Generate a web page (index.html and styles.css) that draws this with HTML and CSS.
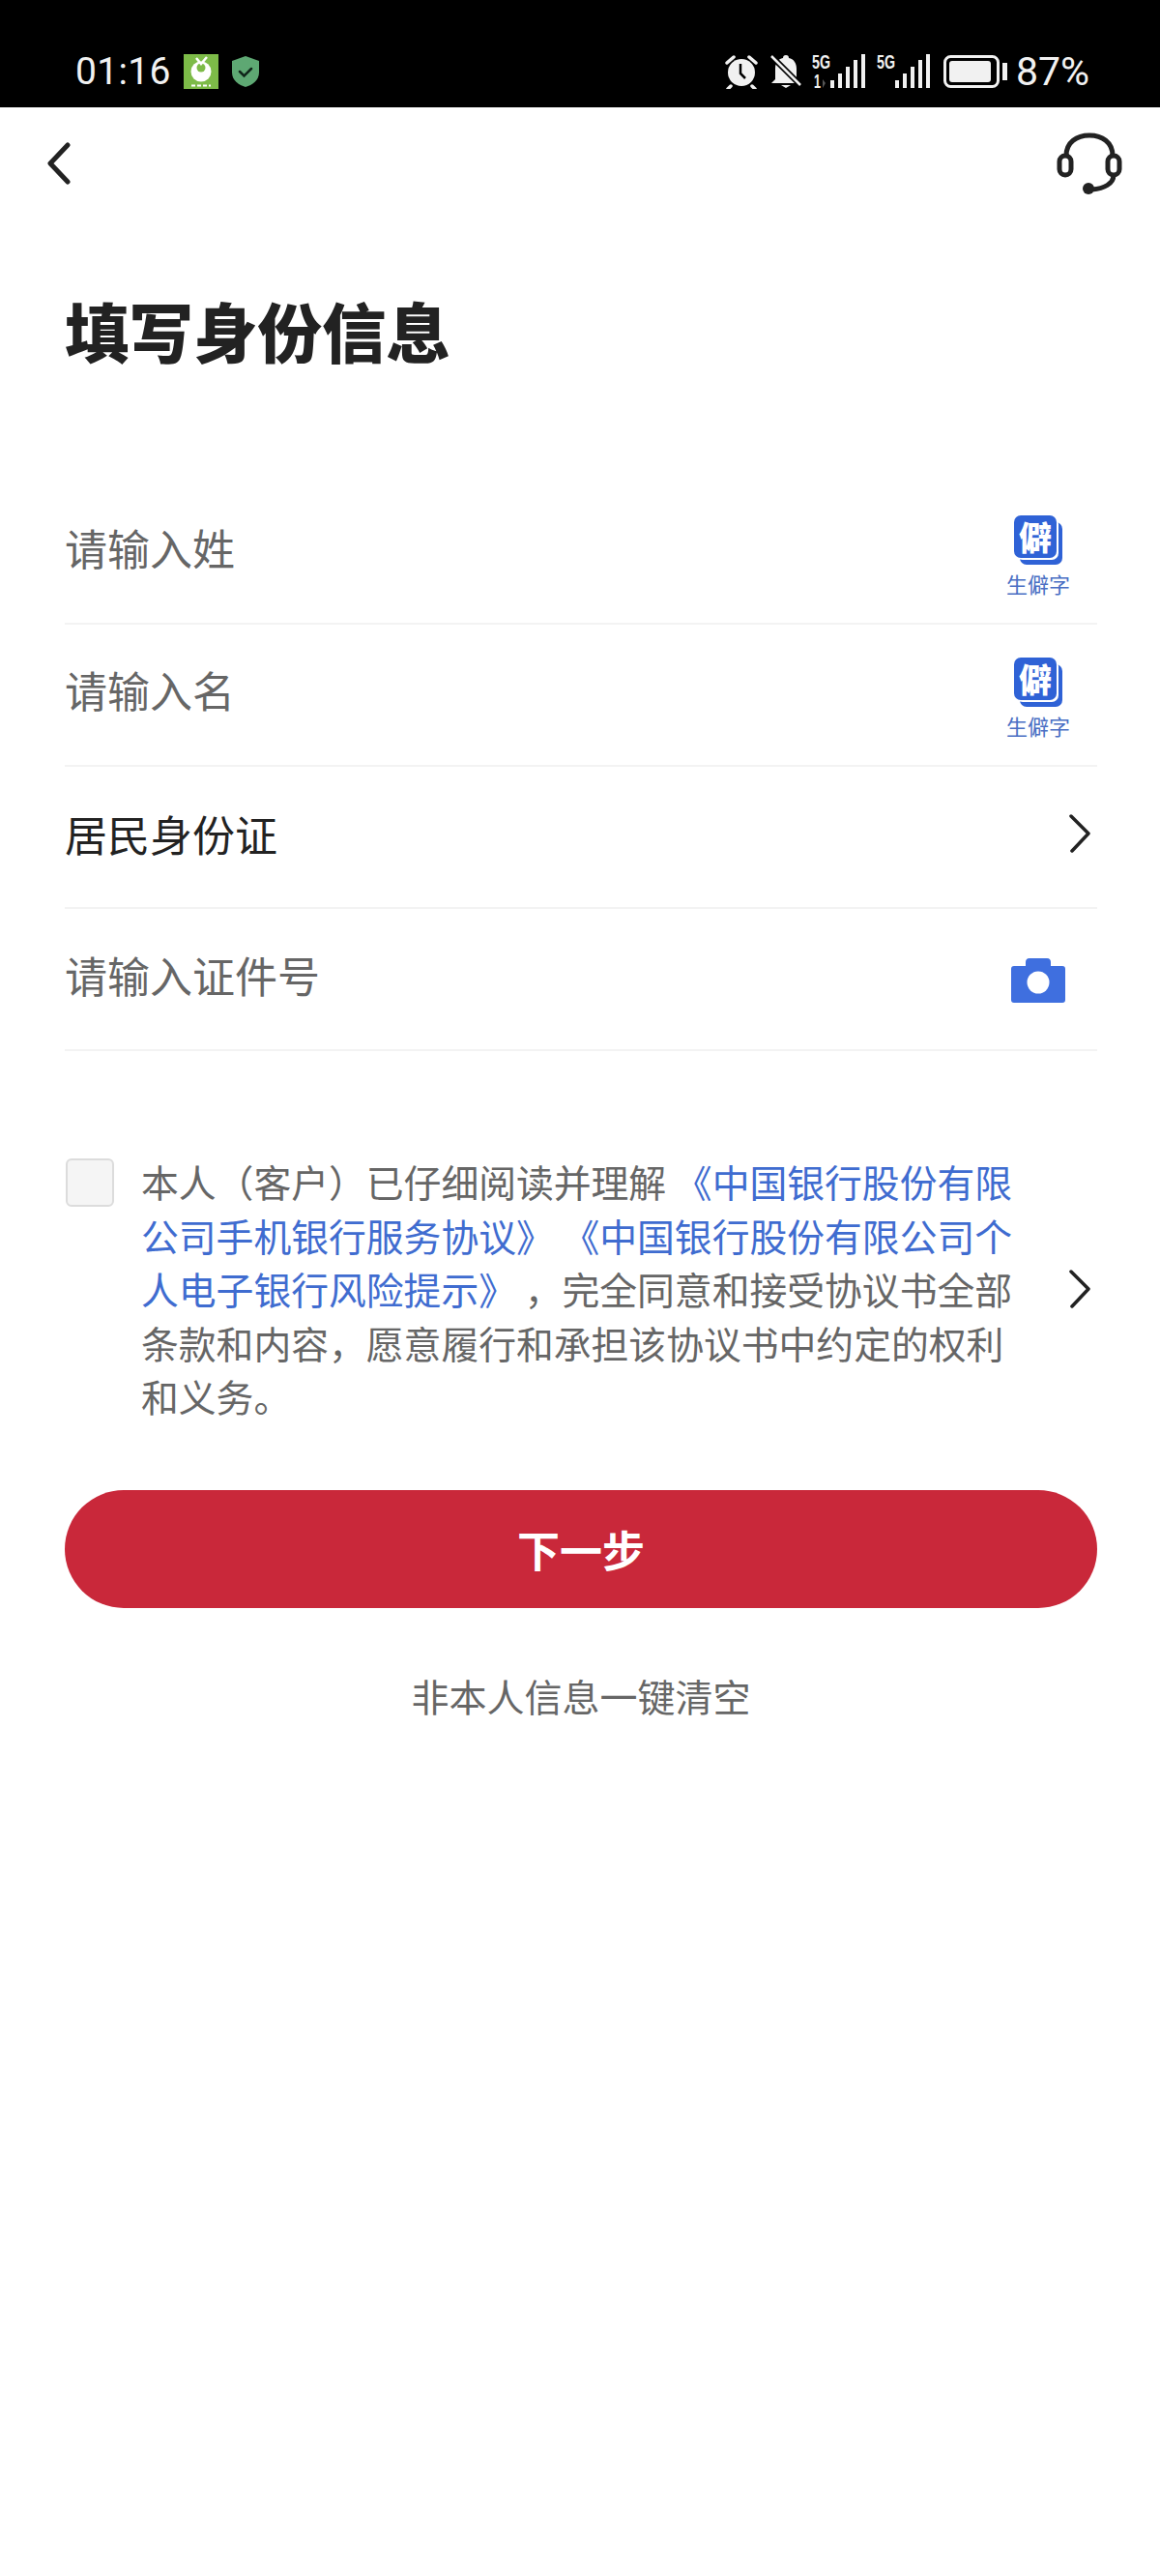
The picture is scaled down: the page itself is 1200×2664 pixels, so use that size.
FILE: index.html
```html
<!DOCTYPE html>
<html lang="zh-CN">
<head>
  <meta charset="UTF-8">
  <title>填写身份信息</title>
  <link rel="stylesheet" href="styles.css">
</head>
<body>
  <div class="status-bar">
    <span class="time">01:16</span>
    <svg class="app-icon" width="36" height="36" viewBox="0 0 36 36">
      <rect width="36" height="36" fill="#7dbb48"/>
      <circle cx="18" cy="18" r="10.500" fill="#fff"/>
      <circle cx="18" cy="14" r="4.500" fill="#7dbb48"/>
      <path d="M13 4l5 6 6-7" fill="none" stroke="#fff" stroke-width="2.500"/>
      <path d="M8 32.500h20" stroke="#fff" stroke-width="2" stroke-dasharray="4 2"/>
    </svg>
    <svg class="shield-icon" width="28" height="32" viewBox="0 0 28 32">
      <path d="M14 0l14 5v12c0 8-7 13-14 15C7 30 0 25 0 17V5z" fill="#5ea873"/>
      <path d="M8 16l4.500 4.500L20 13" fill="none" stroke="#10261a" stroke-width="2.500" stroke-linecap="round"/>
    </svg>
    <span class="status-spacer"></span>
    <svg class="alarm-icon" width="34" height="36" viewBox="0 0 34 36">
      <circle cx="17" cy="19" r="14" fill="#f1f1f1"/>
      <path d="M2 9l7-6M32 9l-7-6M6 33l-3 3M28 33l3 3" stroke="#f1f1f1" stroke-width="3.500" stroke-linecap="round"/>
      <path d="M16 10v10l5 5" fill="none" stroke="#000" stroke-width="2.500"/>
    </svg>
    <svg class="bell-icon" width="32" height="36" viewBox="0 0 32 36">
      <path d="M16 1c2 0 3 1 3 3 5 1 8 5 8 11v11l4 4H1l4-4V15C5 9 8 5 13 4c0-2 1-3 3-3z" fill="#f1f1f1"/>
      <path d="M11 32h10l-5 3z" fill="#f1f1f1"/>
      <path d="M1 2l30 30" stroke="#000" stroke-width="6"/>
      <path d="M1 2l30 30" stroke="#f1f1f1" stroke-width="2.500"/>
    </svg>
    <svg class="signal-icon" width="56" height="50" viewBox="0 -6 56 50">
      <text class="net-label" x="0" y="15" textLength="19" lengthAdjust="spacingAndGlyphs">5G</text>
      <text class="net-label" x="2" y="35" textLength="7" lengthAdjust="spacingAndGlyphs">1</text>
      <path d="M11 26l3 4-3 5z" fill="#555"/>
      <rect x="19" y="27" width="4" height="8" fill="#f1f1f1"/>
      <rect x="27" y="20" width="4" height="15" fill="#f1f1f1"/>
      <rect x="35" y="13" width="4" height="22" fill="#f1f1f1"/>
      <rect x="43" y="6" width="4" height="29" fill="#f1f1f1"/>
      <rect x="51" y="0" width="4" height="35" fill="#f1f1f1"/>
    </svg>
    <svg class="signal-icon" width="56" height="50" viewBox="0 -6 56 50">
      <text class="net-label" x="0" y="15" textLength="19" lengthAdjust="spacingAndGlyphs">5G</text>
      <rect x="19" y="27" width="4" height="8" fill="#f1f1f1"/>
      <rect x="27" y="20" width="4" height="15" fill="#f1f1f1"/>
      <rect x="35" y="13" width="4" height="22" fill="#f1f1f1"/>
      <rect x="43" y="6" width="4" height="29" fill="#f1f1f1"/>
      <rect x="51" y="0" width="4" height="35" fill="#f1f1f1"/>
    </svg>
    <svg class="battery-icon" width="66" height="34" viewBox="0 0 66 34">
      <rect x="1.500" y="1.500" width="55" height="31" rx="6" fill="none" stroke="#f1f1f1" stroke-width="3"/>
      <rect x="6" y="6" width="43" height="22" rx="3" fill="#f1f1f1"/>
      <rect x="61" y="8" width="5" height="18" fill="#f1f1f1"/>
    </svg>
    <span class="battery-text">87%</span>
  </div>

  <div class="nav-bar">
    <svg width="24" height="44" viewBox="0 0 24 44">
      <path d="M21 3L3 22l18 19" fill="none" stroke="#222" stroke-width="5" stroke-linecap="round" stroke-linejoin="round"/>
    </svg>
    <svg width="68" height="64" viewBox="0 0 68 64">
      <path d="M10 24C10 10 21 3 34 3s24 7 24 21" fill="none" stroke="#222" stroke-width="5"/>
      <rect x="3" y="24" width="12" height="20" rx="6" fill="none" stroke="#222" stroke-width="5"/>
      <rect x="53" y="24" width="12" height="20" rx="6" fill="none" stroke="#222" stroke-width="5"/>
      <path d="M59 44c0 9-10 14-22 15" fill="none" stroke="#222" stroke-width="5"/>
      <circle cx="33" cy="58" r="6" fill="#222"/>
    </svg>
  </div>

  <div class="page">
    <h1 class="page-title">填写身份信息</h1>

    <div class="form">
      <div class="form-row name-row">
        <span class="placeholder">请输入姓</span>
        <div class="rare-word">
          <span class="rare-badge">僻</span>
          <span class="rare-label">生僻字</span>
        </div>
      </div>
      <div class="form-row name-row">
        <span class="placeholder">请输入名</span>
        <div class="rare-word">
          <span class="rare-badge">僻</span>
          <span class="rare-label">生僻字</span>
        </div>
      </div>
      <div class="form-row type-row">
        <span class="row-value">居民身份证</span>
        <svg class="chevron" width="24" height="40" viewBox="0 0 24 40">
          <path d="M3 2l18 18L4 38" fill="none" stroke="#222" stroke-width="3.500" stroke-linecap="round" stroke-linejoin="round"/>
        </svg>
      </div>
      <div class="form-row id-row">
        <span class="placeholder">请输入证件号</span>
        <svg class="camera" width="56" height="46" viewBox="0 0 56 46">
          <path d="M15 8V4c0-2 1-4 4-4h18c3 0 4 2 4 4v4h12c2 0 3 1 3 3v32c0 2-1 3-3 3H3c-2 0-3-1-3-3V11c0-2 1-3 3-3z" fill="#3f6fdf"/>
          <circle cx="28" cy="25" r="11.500" fill="#fff"/>
        </svg>
      </div>
    </div>

    <div class="agreement">
      <span class="checkbox"></span>
      <p class="agreement-text">本人（客户）已仔细阅读并理解 <a class="doc-link">《中国银行股份有限<br>公司手机银行服务协议》 《中国银行股份有限公司个<br>人电子银行风险提示》</a> ，完全同意和接受协议书全部<br>条款和内容，愿意履行和承担该协议书中约定的权利<br>和义务。</p>
      <svg class="chevron agreement-chevron" width="24" height="40" viewBox="0 0 24 40">
        <path d="M3 2l18 18L4 38" fill="none" stroke="#222" stroke-width="3.500" stroke-linecap="round" stroke-linejoin="round"/>
      </svg>
    </div>

    <button class="next-btn">下一步</button>
    <div class="clear-link">非本人信息一键清空</div>
  </div>
</body>
</html>
```

FILE: styles.css
```css
* {
  box-sizing: border-box;
}
body {
  margin: 0;
  background: #fff;
  font-family: "Noto Sans CJK SC", "Noto Sans", sans-serif;
}
svg {
  display: block;
  flex-shrink: 0;
}
.status-bar {
  display: flex;
  align-items: center;
  height: 111px;
  padding: 36px 73px 0 78px;
  background: #000;
  color: #f1f1f1;
  font-family: Roboto, sans-serif;
}
.time {
  font-size: 39px;
  letter-spacing: 0.300px;
  margin-right: 13px;
}
.shield-icon {
  margin-left: 14px;
}
.status-spacer {
  flex: 1;
}
.bell-icon {
  margin-left: 13px;
}
.signal-icon {
  margin: 2px 0 0 11px;
}
.battery-icon {
  margin-left: 13px;
}
.battery-text {
  font-size: 41px;
  margin-left: 9px;
}
.net-label {
  fill: #f1f1f1;
  font-family: "Liberation Sans", sans-serif;
  font-size: 21px;
  font-weight: bold;
}
.nav-bar {
  display: flex;
  justify-content: space-between;
  align-items: center;
  padding: 26px 39px 0 49px;
}
.page {
  padding: 0 65px 0 67px;
}
.page-title {
  margin: 92px 0 0;
  font-size: 66.500px;
  line-height: 96px;
  font-weight: 900;
  color: #222;
}
.form {
  margin-top: 110px;
}
.form-row {
  display: flex;
  justify-content: space-between;
  align-items: center;
  height: 147px;
  border-bottom: 2px solid #f3f3f3;
}
.name-row {
  padding-bottom: 12px;
}
.type-row {
  padding-bottom: 7px;
}
.id-row {
  padding-bottom: 9px;
}
.placeholder {
  font-size: 44px;
  color: #666;
}
.row-value {
  font-size: 44px;
  color: #222;
}
.rare-word {
  display: flex;
  flex-direction: column;
  align-items: center;
  width: 66px;
  margin: 20px 28px 0 0;
}
.rare-badge {
  display: flex;
  justify-content: center;
  align-items: center;
  width: 44px;
  height: 44px;
  margin-right: 6px;
  background: #2f62d6;
  border-radius: 7px;
  box-shadow: 2px 2px 0 #fff, 6px 7px 0 #2f62d6;
  color: #fff;
  font-size: 34px;
  font-weight: 900;
  line-height: 44px;
}
.rare-label {
  margin-top: 11px;
  font-size: 22px;
  line-height: 30px;
  color: #4a6fc4;
  white-space: nowrap;
}
.chevron {
  margin-right: 6px;
}
.camera {
  margin: 11px 33px 0 0;
}
.agreement {
  display: flex;
  align-items: center;
  margin-top: 107px;
}
.checkbox {
  align-self: flex-start;
  width: 50px;
  height: 50px;
  margin: 4px 28px 0 1px;
  background: #f5f5f5;
  border: 2px solid #dcdcdc;
  border-radius: 6px;
}
.agreement-text {
  flex: 1;
  margin: 0;
  font-size: 38.800px;
  line-height: 55.500px;
  color: #666;
  white-space: nowrap;
}
.doc-link {
  color: #3f6cd0;
}
.next-btn {
  display: block;
  width: 100%;
  height: 122px;
  margin-top: 69px;
  border: none;
  border-radius: 61px;
  background: #c9283a;
  color: #fff;
  font-family: inherit;
  font-size: 44px;
  font-weight: 700;
}
.clear-link {
  margin-top: 62px;
  text-align: center;
  font-size: 39px;
  line-height: 56px;
  color: #666;
}
```
